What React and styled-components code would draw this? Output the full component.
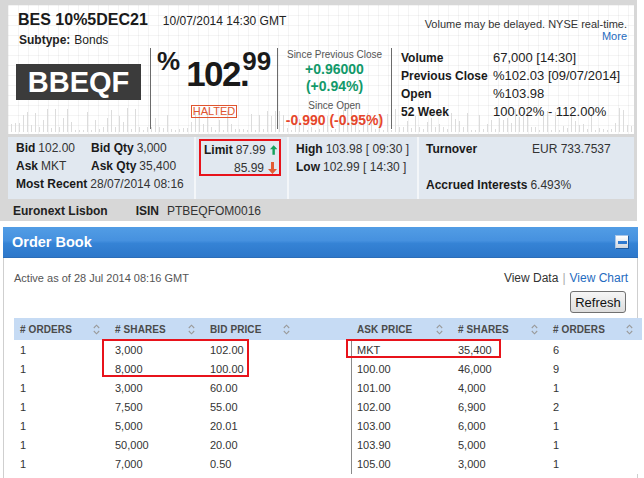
import React from 'react';
import styled, { createGlobalStyle } from 'styled-components';

const Global = createGlobalStyle`
  html, body { margin: 0; padding: 0; background: #fff; }
  body { font-family: "Liberation Sans", Arial, sans-serif; color: #222; }
  * { box-sizing: border-box; }
`;

const Page = styled.div`
  width: 644px;
  height: 478px;
  overflow: hidden;
  background: #fff;
`;

/* ---------- Quote area ---------- */
const Frame = styled.div`
  width: 637px;
  height: 221px;
  background: #d7d7d7;
  padding: 5px 3px 0 8px;
  display: flex;
  flex-direction: column;
`;

const QuotePanel = styled.div`
  position: relative;
  height: 129px;
  background-color: #fff;
  background-image:
    repeating-linear-gradient(to right, rgba(0,0,0,0.045) 0 1px, transparent 1px 10px),
    repeating-linear-gradient(to bottom, rgba(0,0,0,0.045) 0 1px, transparent 1px 10px);
  display: flex;
  flex-direction: column;
`;

const Bars = styled.svg`
  position: absolute;
  left: 0;
  bottom: 2px;
  pointer-events: none;
`;

const TopRow = styled.div`
  position: relative;
  height: 43px;
  display: flex;
  justify-content: space-between;
  padding: 5px 7px 0 10px;
`;

const TitleLine = styled.div`
  display: flex;
  align-items: baseline;
  gap: 15px;
  line-height: 20px;
`;

const Title = styled.span`
  font-size: 16px;
  font-weight: bold;
  color: #1a1a1a;
`;

const DateText = styled.span`
  font-size: 12px;
  color: #222;
`;

const Subtype = styled.div`
  margin-top: 2px;
  padding-left: 1px;
  font-size: 12px;
  line-height: 14px;
  color: #222;
  b { margin-right: 4px; }
`;

const Note = styled.div`
  padding-top: 8px;
  text-align: right;
  font-size: 11px;
  line-height: 12px;
  color: #333;
`;

const Link = styled.span`
  color: ${p => p.$dark ? '#333' : '#1f6cc0'};
`;

const MainRow = styled.div`
  position: relative;
  height: 76px;
  display: grid;
  grid-template-columns: 142px 127px 114px 1fr;
`;

const Col = styled.div`
  border-left: ${p => p.$sep ? '1px solid #6b6b6b' : 'none'};
  display: flex;
  flex-direction: column;
  align-items: ${p => p.$center ? 'center' : 'stretch'};
`;

const Ticker = styled.div`
  margin: 16px 0 0 8px;
  width: 125px;
  height: 36px;
  background: #3b3b3b;
  color: #fff;
  font-size: 29px;
  font-weight: bold;
  line-height: 36px;
  text-align: center;
`;

const PriceLine = styled.div`
  display: flex;
  align-items: flex-start;
  padding-left: 6px;
  align-self: stretch;
  height: 43px;
`;

const Pct = styled.span`
  font-size: 26px;
  font-weight: bold;
  line-height: 26px;
  color: #1a1a1a;
`;

const Big = styled.span`
  margin: 8px 0 0 6px;
  font-size: 35px;
  font-weight: bold;
  line-height: 35px;
  letter-spacing: -1.5px;
  color: #1a1a1a;
`;

const Sup = styled.span`
  margin-left: -6px;
  font-size: 26px;
  font-weight: bold;
  line-height: 26px;
  color: #1a1a1a;
`;

const Halted = styled.div`
  margin-top: 14px;
  border: 1px solid #e0552f;
  color: #e0552f;
  font-size: 11px;
  line-height: 11px;
  padding: 0 1px;
`;

const SmallLabel = styled.div`
  font-size: 10px;
  line-height: 12px;
  color: #555;
  margin-top: ${p => p.$mt || 0}px;
`;

const Change = styled.div`
  font-size: 14px;
  font-weight: bold;
  line-height: 17px;
  color: ${p => p.$up ? '#12996a' : '#e6462b'};
`;

const ChangeCol = styled(Col)`
  padding-top: 1px;
`;

const Stats = styled.div`
  padding: 1px 0 0 9px;
  display: grid;
  grid-template-columns: 92px auto;
  line-height: 18px;
  align-content: start;
`;

const StatLabel = styled.span`
  font-size: 12px;
  font-weight: bold;
  color: #1a1a1a;
`;

const StatValue = styled.span`
  font-size: 13px;
  color: #222;
`;

/* ---------- Info panel ---------- */
const InfoPanel = styled.div`
  margin-top: 3px;
  height: 62px;
  display: grid;
  grid-template-columns: 186px 91px 128px 1fr;
  gap: 2px;
  background: #f3f6f9;
`;

const InfoCell = styled.div`
  background: #e1e8f0;
  padding: ${p => p.$pad || '2px 0 0 8px'};
`;

const InfoRow = styled.div`
  display: flex;
  align-items: baseline;
  line-height: 18px;
  height: 18px;
  font-size: 12px;
  color: #333;
  justify-content: ${p => p.$right ? 'flex-end' : 'flex-start'};
`;

const Pair = styled.span`
  width: ${p => p.$w ? p.$w + 'px' : 'auto'};
  white-space: nowrap;
  b { color: #1a1a1a; margin-right: 3px; }
`;

const LimitBox = styled.div`
  margin: 0 6px 0 3px;
  height: 37px;
  border: 2px solid #e8131b;
  padding: 0 2px 0 3px;
`;

const Arrow = styled.svg`
  margin-left: 4px;
  align-self: center;
`;

const Footer = styled.div`
  height: 22px;
  padding: 4px 0 0 5px;
  font-size: 12px;
  line-height: 16px;
  color: #333;
  display: flex;
  gap: 20px;
  b { color: #222; margin-right: 8px; }
`;

/* ---------- Order book ---------- */
const OrderBook = styled.section`
  margin: 6px 0 0 3px;
  width: 635px;
`;

const BookHeader = styled.div`
  height: 31px;
  background: linear-gradient(#529de5 0%, #4691df 45%, #3583d5 55%, #2d77ca 100%);
  border-bottom: 1px solid #2b6db8;
  display: flex;
  align-items: center;
  justify-content: space-between;
  padding: 0 9px 0 9px;
`;

const BookTitle = styled.h2`
  margin: 0;
  font-size: 14.5px;
  font-weight: bold;
  color: #fff;
`;

const MinBtn = styled.div`
  width: 14px;
  height: 14px;
  background: linear-gradient(#ffffff, #d0d6de);
  border: 1px solid #1d5aa0;
  border-top-color: #a9c6e8;
  border-left-color: #a9c6e8;
  display: flex;
  align-items: center;
  justify-content: center;
  &::after {
    content: '';
    width: 9px;
    height: 3px;
    background: #2f7ad0;
  }
`;

const BookBody = styled.div`
  border-left: 1px solid #cfcfcf;
  border-right: 1px solid #cfcfcf;
  padding: 13px 0 0 10px;
  height: 220px;
`;

const Toolbar = styled.div`
  display: flex;
  justify-content: space-between;
  padding-right: 9px;
  height: 47px;
`;

const Active = styled.div`
  font-size: 11px;
  line-height: 14px;
  color: #555;
`;

const ToolRight = styled.div`
  display: flex;
  flex-direction: column;
  align-items: flex-end;
`;

const Links = styled.div`
  font-size: 12px;
  line-height: 14px;
`;

const Pipe = styled.span`
  color: #aaa;
  margin: 0 4px;
`;

const Refresh = styled.button`
  margin: 6px 2px 0 0;
  width: 56px;
  height: 22px;
  padding: 0;
  font-family: "Liberation Sans", Arial, sans-serif;
  font-size: 13px;
  color: #111;
  background: linear-gradient(#f6f6f6, #dddddd);
  border: 1px solid #707070;
  border-radius: 3px;
`;

const Table = styled.div`
  position: relative;
  width: 628px;
`;

const cols = '95px 95px 95px 52px 101px 95px 95px';

const HeadRow = styled.div`
  display: grid;
  grid-template-columns: ${cols};
  height: 22px;
  background: #c6dbf4;
`;

const HeadCell = styled.div`
  display: flex;
  align-items: center;
  justify-content: space-between;
  padding: 0 9px 0 6px;
  font-size: 10px;
  font-weight: bold;
  color: #4a4a4a;
  letter-spacing: 0.1px;
`;

const BodyRows = styled.div`
  padding-top: 1px;
  background: #fff;
`;

const Row = styled.div`
  display: grid;
  grid-template-columns: ${cols};
  height: 19px;
  background: #fff;
`;

const Cell = styled.div`
  padding-left: ${p => p.$sep ? '5px' : '6px'};
  border-left: ${p => p.$sep ? '1px solid #8a8a8a' : 'none'};
  font-size: 11px;
  line-height: 19px;
  color: #333;
`;

const Highlight = styled.div`
  position: absolute;
  left: ${p => p.$l}px;
  top: ${p => p.$t}px;
  width: ${p => p.$w}px;
  height: ${p => p.$h}px;
  border: 2px solid #e8131b;
  pointer-events: none;
`;

const SortIcon = () => (
  <svg width="7" height="11" viewBox="0 0 7 11">
    <path d="M0.8 4 L3.5 1.2 L6.2 4 M0.8 7 L3.5 9.8 L6.2 7" fill="none" stroke="#9a9a9a" strokeWidth="1.1" />
  </svg>
);

const UpArrow = () => (
  <Arrow width="9" height="12" viewBox="0 0 9 12">
    <path d="M4.5 0 L9 5 L6 5 L6 12 L3 12 L3 5 L0 5 Z" fill="#17a05d" />
  </Arrow>
);

const DownArrow = () => (
  <Arrow width="9" height="12" viewBox="0 0 9 12">
    <path d="M4.5 12 L9 7 L6 7 L6 0 L3 0 L3 7 L0 7 Z" fill="#e35b35" />
  </Arrow>
);

const barHeights = Array.from({ length: 156 }, (_, i) => {
  const r = Math.abs(Math.sin(i * 12.9898 + 3.1) * 43758.5453) % 1;
  return 2 + Math.round(r * r * 22);
});

const bids = [
  ['1', '3,000', '102.00'],
  ['1', '8,000', '100.00'],
  ['1', '3,000', '60.00'],
  ['1', '7,500', '55.00'],
  ['1', '5,000', '20.01'],
  ['1', '50,000', '20.00'],
  ['1', '7,000', '0.50'],
];

const asks = [
  ['MKT', '35,400', '6'],
  ['100.00', '46,000', '9'],
  ['101.00', '4,000', '1'],
  ['102.00', '6,900', '2'],
  ['103.00', '6,000', '1'],
  ['103.90', '5,000', '1'],
  ['105.00', '3,000', '1'],
];

const heads = ['# ORDERS', '# SHARES', 'BID PRICE', null, 'ASK PRICE', '# SHARES', '# ORDERS'];

export default function App() {
  return (
    <Page>
      <Global />
      <Frame>
        <QuotePanel>
          <Bars width="626" height="28" viewBox="0 0 626 28">
            {barHeights.map((h, i) => (
              <rect key={i} x={3 + i * 4} y={28 - h} width="1" height={h} fill="#dcdcdc" />
            ))}
          </Bars>
          <TopRow>
            <div>
              <TitleLine>
                <Title>BES 10%5DEC21</Title>
                <DateText>10/07/2014 14:30 GMT</DateText>
              </TitleLine>
              <Subtype><b>Subtype:</b>Bonds</Subtype>
            </div>
            <Note>
              <div>Volume may be delayed. NYSE real-time.</div>
              <Link>More</Link>
            </Note>
          </TopRow>
          <MainRow>
            <Col>
              <Ticker>BBEQF</Ticker>
            </Col>
            <Col $sep $center>
              <PriceLine>
                <Pct>%</Pct>
                <Big>102.</Big>
                <Sup>99</Sup>
              </PriceLine>
              <Halted>HALTED</Halted>
            </Col>
            <ChangeCol $sep $center>
              <SmallLabel>Since Previous Close</SmallLabel>
              <Change $up>+0.96000</Change>
              <Change $up>(+0.94%)</Change>
              <SmallLabel $mt={5}>Since Open</SmallLabel>
              <Change>-0.990 (-0.95%)</Change>
            </ChangeCol>
            <Col $sep>
              <Stats>
                <StatLabel>Volume</StatLabel><StatValue>67,000 [14:30]</StatValue>
                <StatLabel>Previous Close</StatLabel><StatValue>%102.03 [09/07/2014]</StatValue>
                <StatLabel>Open</StatLabel><StatValue>%103.98</StatValue>
                <StatLabel>52 Week</StatLabel><StatValue>100.02% - 112.00%</StatValue>
              </Stats>
            </Col>
          </MainRow>
        </QuotePanel>

        <InfoPanel>
          <InfoCell>
            <InfoRow>
              <Pair $w={75}><b>Bid</b>102.00</Pair>
              <Pair><b>Bid Qty</b>3,000</Pair>
            </InfoRow>
            <InfoRow>
              <Pair $w={75}><b>Ask</b>MKT</Pair>
              <Pair><b>Ask Qty</b>35,400</Pair>
            </InfoRow>
            <InfoRow>
              <Pair><b>Most Recent</b>28/07/2014 08:16</Pair>
            </InfoRow>
          </InfoCell>
          <InfoCell $pad="2px 0 0 0">
            <LimitBox>
              <InfoRow>
                <Pair><b>Limit</b>87.99</Pair>
                <UpArrow />
              </InfoRow>
              <InfoRow $right>
                <Pair>85.99</Pair>
                <DownArrow />
              </InfoRow>
            </LimitBox>
          </InfoCell>
          <InfoCell $pad="3px 0 0 7px">
            <InfoRow>
              <Pair><b>High</b>103.98 [ 09:30 ]</Pair>
            </InfoRow>
            <InfoRow>
              <Pair><b>Low</b>102.99 [ 14:30 ]</Pair>
            </InfoRow>
          </InfoCell>
          <InfoCell $pad="3px 0 0 7px">
            <InfoRow>
              <Pair $w={106}><b>Turnover</b></Pair>
              <Pair>EUR 733.7537</Pair>
            </InfoRow>
            <InfoRow />
            <InfoRow>
              <Pair><b>Accrued Interests</b>6.493%</Pair>
            </InfoRow>
          </InfoCell>
        </InfoPanel>

        <Footer>
          <span><b>Euronext Lisbon</b></span>
          <span><b>ISIN</b>PTBEQFOM0016</span>
        </Footer>
      </Frame>

      <OrderBook>
        <BookHeader>
          <BookTitle>Order Book</BookTitle>
          <MinBtn />
        </BookHeader>
        <BookBody>
          <Toolbar>
            <Active>Active as of 28 Jul 2014 08:16 GMT</Active>
            <ToolRight>
              <Links>
                <Link $dark>View Data</Link>
                <Pipe>|</Pipe>
                <Link>View Chart</Link>
              </Links>
              <Refresh>Refresh</Refresh>
            </ToolRight>
          </Toolbar>
          <Table>
            <HeadRow>
              {heads.map((h, i) => (
                <HeadCell key={i}>
                  {h && <span>{h}</span>}
                  {h && <SortIcon />}
                </HeadCell>
              ))}
            </HeadRow>
            <BodyRows>
              {bids.map((b, i) => (
                <Row key={i}>
                  <Cell>{b[0]}</Cell>
                  <Cell>{b[1]}</Cell>
                  <Cell>{b[2]}</Cell>
                  <Cell />
                  <Cell $sep>{asks[i][0]}</Cell>
                  <Cell>{asks[i][1]}</Cell>
                  <Cell>{asks[i][2]}</Cell>
                </Row>
              ))}
            </BodyRows>
            <Highlight $l={88} $t={21} $w={147} $h={38} />
            <Highlight $l={332} $t={21} $w={155} $h={19} />
          </Table>
        </BookBody>
      </OrderBook>
    </Page>
  );
}
